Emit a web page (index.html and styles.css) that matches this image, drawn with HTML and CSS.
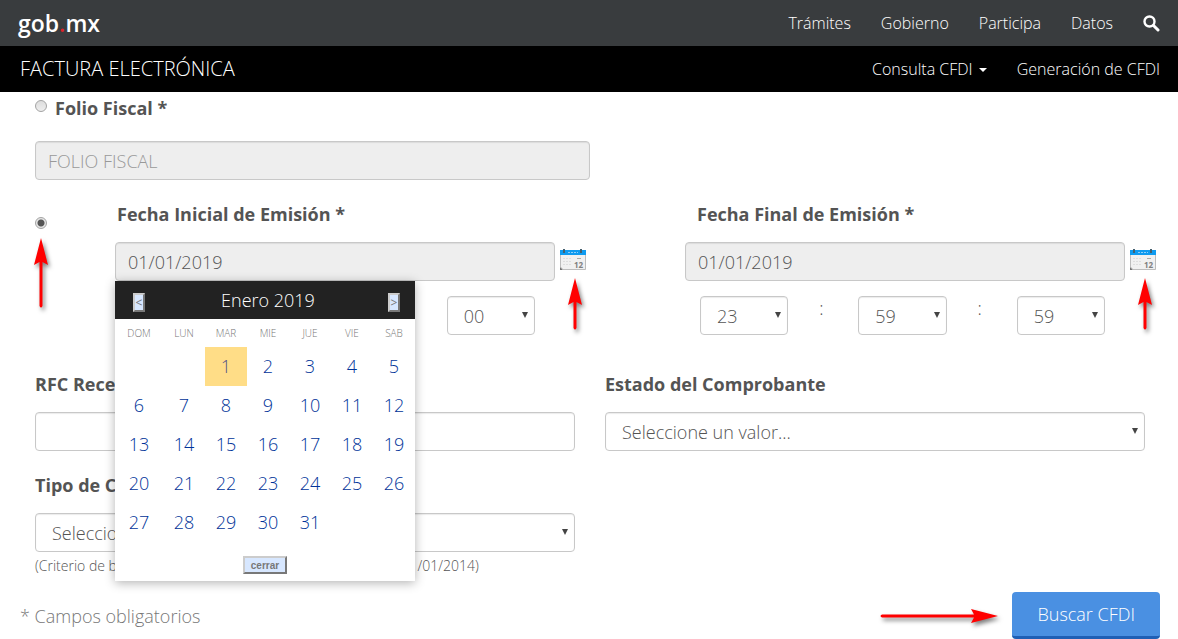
FILE: index.html
```html
<!DOCTYPE html>
<html lang="es">
<head>
  <meta charset="UTF-8">
  <meta name="viewport" content="width=device-width, initial-scale=1.0">
  <title>Factura Electrónica</title>
  <link rel="stylesheet" href="styles.css">
</head>
<body>

  <!-- Shared shapes -->
  <svg class="sprite" aria-hidden="true">
    <symbol id="arrow" viewBox="0 0 14 70">
      <path d="M7 0 L14 27 L8.500 24 V68 Q7 71 5.500 68 V24 L0 27 Z" fill="#ff0000"/>
    </symbol>
    <symbol id="arrow-short" viewBox="0 0 14 52">
      <path d="M7 0 L14 27 L8.500 24 V50 Q7 53 5.500 50 V24 L0 27 Z" fill="#ff0000"/>
    </symbol>
    <symbol id="calendar-icon" viewBox="0 0 26 22">
      <path d="M0.500 5 H25.500 V20.500 H3 L0.500 18 Z" fill="#f1f1f1" stroke="#bdbdbd"/>
      <path d="M0 18 L3 21 H0 Z" fill="#777"/>
      <rect y="1" width="26" height="5" fill="#0f9bf0"/>
      <path d="M8 3.500 H18" stroke="#8fd0f8" stroke-dasharray="2 1"/>
      <path d="M4 0 V4 M21 0 V4" stroke="#44606f" stroke-width="2"/>
      <path d="M3 9.500 H11 M3 12.500 H11 M3 15.500 H11" stroke="#dedede" stroke-dasharray="2 1"/>
      <path d="M17 9.500 H21" stroke="#aaa"/>
      <text x="14" y="19" class="calendar-day">12</text>
    </symbol>
  </svg>

  <header>
    <nav class="topbar">
      <a href="#" class="logo">gob<span>.</span>mx</a>
      <div class="links">
        <a href="#">Trámites</a>
        <a href="#">Gobierno</a>
        <a href="#">Participa</a>
        <a href="#">Datos</a>
        <a href="#" class="search" aria-label="Buscar">
          <svg width="17" height="17" viewBox="0 0 17 17">
            <circle cx="6.500" cy="6.500" r="5" fill="none" stroke="#fff" stroke-width="2.400"/>
            <path d="M10.500 10.500 L15 15" stroke="#fff" stroke-width="3" stroke-linecap="round"/>
          </svg>
        </a>
      </div>
    </nav>
    <nav class="subbar">
      <a href="#" class="brand">FACTURA ELECTRÓNICA</a>
      <div class="links">
        <a href="#">Consulta CFDI <span class="caret"></span></a>
        <a href="#">Generación de CFDI</a>
      </div>
    </nav>
  </header>

  <main>
    <form>
      <div class="folio">
        <div class="folio-title">
          <input type="radio" name="tipo" id="porFolio">
          <label for="porFolio">Folio Fiscal *</label>
        </div>
        <input type="text" class="control" placeholder="FOLIO FISCAL" aria-label="Folio Fiscal" disabled>
      </div>

      <div class="fechas">
        <div class="radio-cell">
          <input type="radio" name="tipo" id="porFecha" aria-label="Buscar por fecha de emisión" checked>
          <svg class="arrow" width="14" height="70"><use href="#arrow"/></svg>
        </div>

        <div class="fecha">
          <label for="fechaInicial">Fecha Inicial de Emisión *</label>
          <div class="date-row">
            <input type="text" class="control" id="fechaInicial" value="01/01/2019" disabled>
            <button type="button" class="date-button" aria-label="Abrir calendario inicial">
              <svg width="26" height="22"><use href="#calendar-icon"/></svg>
            </button>
            <svg class="arrow" width="14" height="52"><use href="#arrow-short"/></svg>

            <!-- Date picker -->
            <div class="picker">
              <table>
                <thead>
                  <tr class="month">
                    <th><button type="button">&lt;</button></th>
                    <th colspan="5">Enero 2019</th>
                    <th><button type="button">&gt;</button></th>
                  </tr>
                  <tr class="days">
                    <th>DOM</th><th>LUN</th><th>MAR</th><th>MIE</th><th>JUE</th><th>VIE</th><th>SAB</th>
                  </tr>
                </thead>
                <tbody>
                  <tr><td></td><td></td><td class="today">1</td><td>2</td><td>3</td><td>4</td><td>5</td></tr>
                  <tr><td>6</td><td>7</td><td>8</td><td>9</td><td>10</td><td>11</td><td>12</td></tr>
                  <tr><td>13</td><td>14</td><td>15</td><td>16</td><td>17</td><td>18</td><td>19</td></tr>
                  <tr><td>20</td><td>21</td><td>22</td><td>23</td><td>24</td><td>25</td><td>26</td></tr>
                  <tr><td>27</td><td>28</td><td>29</td><td>30</td><td>31</td><td></td><td></td></tr>
                </tbody>
              </table>
              <div class="picker-footer">
                <button type="button">cerrar</button>
              </div>
            </div>
          </div>
          <div class="time-row">
            <select class="control" aria-label="Hora inicial"><option>00</option></select>
            <span>:</span>
            <select class="control" aria-label="Minuto inicial"><option>00</option></select>
            <span>:</span>
            <select class="control" aria-label="Segundo inicial"><option>00</option></select>
          </div>
        </div>

        <div class="fecha fecha-final">
          <label for="fechaFinal">Fecha Final de Emisión *</label>
          <div class="date-row">
            <input type="text" class="control" id="fechaFinal" value="01/01/2019" disabled>
            <button type="button" class="date-button" aria-label="Abrir calendario final">
              <svg width="26" height="22"><use href="#calendar-icon"/></svg>
            </button>
            <svg class="arrow" width="14" height="52"><use href="#arrow-short"/></svg>
          </div>
          <div class="time-row">
            <select class="control" aria-label="Hora final"><option>23</option></select>
            <span>:</span>
            <select class="control" aria-label="Minuto final"><option>59</option></select>
            <span>:</span>
            <select class="control" aria-label="Segundo final"><option>59</option></select>
          </div>
        </div>
      </div>

      <div class="fields">
        <div class="field">
          <label for="rfc">RFC Receptor</label>
          <input type="text" class="control" id="rfc">
        </div>
        <div class="field">
          <label for="estado">Estado del Comprobante</label>
          <select class="control" id="estado"><option>Seleccione un valor...</option></select>
        </div>
        <div class="field">
          <label for="complemento">Tipo de Comprobante</label>
          <select class="control" id="complemento"><option>Seleccione un valor...</option></select>
          <small>(Criterio de búsqueda válido para facturas emitidas desde 01/01/2014)</small>
        </div>
      </div>

      <div class="actions">
        <p>* Campos obligatorios</p>
        <svg class="arrow-side" width="118" height="14" viewBox="0 0 118 14">
          <path d="M118 7 L91 0 L94 5.500 H2 Q-1 7 2 8.500 H94 L91 14 Z" fill="#ff0000"/>
        </svg>
        <button type="submit" class="submit">Buscar CFDI</button>
      </div>
    </form>
  </main>

</body>
</html>
```
FILE: styles.css
```css
* {
  box-sizing: border-box;
}

body {
  margin: 0;
  background: #fff;
  color: #545454;
  font-family: "Open Sans", "Noto Sans", sans-serif;
  font-size: 18px;
  font-weight: 300;
  line-height: 24px;
}

.sprite {
  display: none;
}

a {
  color: #fff;
  text-decoration: none;
}

/* Header */
.topbar,
.subbar {
  display: flex;
  justify-content: space-between;
  align-items: center;
  height: 46px;
  padding: 0 18px;
  font-size: 16px;
}

.topbar {
  background: #393c3e;
}

.subbar {
  background: #000;
}

.logo {
  font-size: 23px;
  font-weight: 600;
}

.logo span {
  color: #d8232a;
}

.brand {
  padding-left: 2px;
  font-size: 20px;
}

.links {
  display: flex;
  align-items: center;
  gap: 30px;
}

.search {
  display: flex;
}

.caret {
  display: inline-block;
  margin-left: 2px;
  border: 4px solid transparent;
  border-top-color: #fff;
  border-bottom: 0;
  vertical-align: 3px;
}

/* Form */
main {
  padding: 4px 18px 0 20px;
}

label {
  display: block;
  font-weight: 700;
}

.control {
  display: block;
  width: 100%;
  height: 39px;
  padding: 0 12px;
  border: 1px solid #c8c8c8;
  border-radius: 4px;
  background-color: #fff;
  box-shadow: inset 0 1px 1px rgba(0, 0, 0, 0.08);
  color: #545454;
  font: inherit;
}

.control:disabled {
  background-color: #eee;
}

.control::placeholder {
  color: #999;
}

select.control {
  appearance: none;
  padding: 0 16px;
  background-image: url("data:image/svg+xml,%3Csvg xmlns='http://www.w3.org/2000/svg' width='6' height='6'%3E%3Cpath d='M0 0h6L3 6z' fill='%23444'/%3E%3C/svg%3E");
  background-repeat: no-repeat;
  background-position: right 6px top 15px;
}

input[type="radio"] {
  appearance: none;
  flex: none;
  width: 12px;
  height: 12px;
  margin: 0;
  border: 1px solid #a3a3a3;
  border-radius: 50%;
  background: linear-gradient(#ddd, #eee);
}

input[type="radio"]:checked {
  background: radial-gradient(circle, #555 0 3px, #e6e6e6 4px);
}

.folio {
  width: 50%;
  padding-left: 15px;
}

.folio-title {
  display: flex;
  gap: 8px;
  margin-bottom: 21px;
}

.folio-title input {
  margin-top: 4px;
}

.fechas {
  display: grid;
  grid-template-columns: 95px 1fr 95px 1fr;
  margin-top: 22px;
}

.radio-cell {
  position: relative;
  padding: 14px 0 0 15px;
  line-height: 12px;
}

.fecha {
  padding-right: 4px;
}

.fecha label {
  margin-bottom: 16px;
  padding-left: 2px;
}

.fecha-final {
  grid-column: 4;
}

.fecha-final label {
  padding-left: 12px;
}

.date-row {
  display: flex;
  position: relative;
  align-items: flex-start;
  gap: 5px;
}

.date-button {
  flex: none;
  margin-top: 7px;
  padding: 0;
  border: 0;
  background: none;
  line-height: 0;
}

.calendar-day {
  fill: #808080;
  font: 700 8px "Open Sans", sans-serif;
}

.arrow {
  position: absolute;
  filter: drop-shadow(2px 3px 2px rgba(0, 0, 0, 0.5));
}

.radio-cell .arrow {
  top: 36px;
  left: 14px;
}

.date-row .arrow {
  top: 36px;
  right: 4px;
}

.time-row {
  display: flex;
  margin-top: 15px;
  padding: 0 51px 0 15px;
}

.time-row select {
  flex: 1;
  min-width: 0;
}

.time-row span {
  flex: none;
  width: 70px;
  padding-right: 4px;
  text-align: center;
}

.fields {
  display: grid;
  grid-template-columns: 1fr 1fr;
  row-gap: 22px;
  margin-top: 37px;
}

.field {
  padding: 0 15px;
}

.field label {
  margin-bottom: 16px;
}

.field small {
  display: block;
  margin-top: 4px;
  font-size: 14px;
  line-height: 20px;
  white-space: nowrap;
}

/* Date picker */
.picker {
  position: absolute;
  top: 39px;
  left: 0;
  z-index: 1;
  width: 300px;
  background: #fff;
  box-shadow: 0 2px 10px rgba(0, 0, 0, 0.3);
}

.picker table {
  width: 100%;
  border-collapse: collapse;
  table-layout: fixed;
}

.picker th,
.picker td {
  height: 39px;
  padding: 0;
  font-weight: 300;
  text-align: center;
}

.picker th:first-child {
  width: 48px;
}

.picker td {
  padding-bottom: 2px;
  color: #003399;
}

.picker .month th {
  height: 38px;
  background: #222;
  color: #fff;
}

.picker .days th {
  height: 28px;
  color: #777;
  font-size: 10px;
}

.picker .today {
  background: #ffdd87;
  color: #545488;
}

.picker button {
  border: 2px outset #ccc;
  background: #d7e7ff;
  color: #777;
}

.month button {
  width: 12px;
  height: 19px;
  padding: 0;
  font: 12px "Open Sans", sans-serif;
  line-height: 15px;
}

.picker-footer {
  display: flex;
  justify-content: center;
  padding: 14px 0 7px;
}

.picker-footer button {
  height: 18px;
  padding: 0 6px;
  font: 700 10px "Liberation Sans", sans-serif;
}

/* Bottom row */
.actions {
  display: flex;
  align-items: center;
  margin-top: 16px;
}

.actions p {
  flex: 1;
  margin: 0;
  color: #777;
}

.arrow-side {
  margin-right: 14px;
  overflow: visible;
  filter: drop-shadow(2px 3px 2px rgba(0, 0, 0, 0.5));
}

.submit {
  height: 47px;
  padding: 0 25px;
  border: 0;
  border-bottom: 3px solid #1f5fb5;
  border-radius: 4px;
  background: #4a90e2;
  color: #fff;
  font: inherit;
}
```
